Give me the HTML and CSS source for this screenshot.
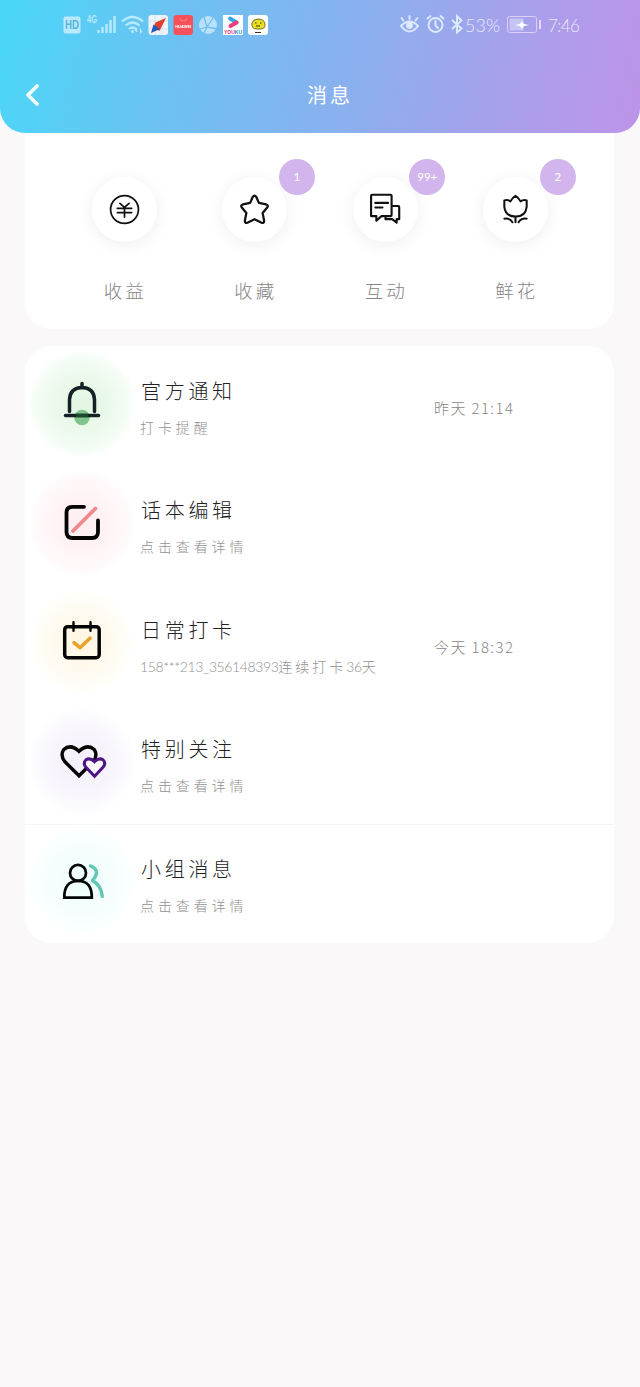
FILE: index.html
```html
<!DOCTYPE html>
<html lang="zh-CN">
<head>
<meta charset="utf-8">
<title>消息</title>
<link rel="stylesheet" href="styles.css">
</head>
<body>
<header class="header">
  <div class="status">
    <svg class="status-left" viewBox="60 10 212 30">
      <rect x="63.500" y="16.500" width="17" height="17" rx="2" fill="#b9e9fc"/>
      <text x="72" y="29" class="hd" textLength="14" lengthAdjust="spacingAndGlyphs">HD</text>
      <text x="92" y="23" class="net" textLength="10" lengthAdjust="spacingAndGlyphs">4G</text>
      <path d="M98.500 33v-3M102.500 33v-6M106.500 33v-9M110.500 33v-13M114.500 33V16" stroke="#b9e9fc" stroke-width="2.400"/>
      <g fill="none" stroke="#b9e9fc" stroke-width="2.200"><path d="M122 21.500q10.500-9 21 0M125.500 25.500q7-6 14 0M129 29q3.500-3 7 0"/></g>
      <circle cx="132.500" cy="31.500" r="1.500" fill="#b9e9fc"/>
      <path d="M136.500 32v-3l-1.500 1.500M140.500 28.500v4l1.500-1.500" fill="none" stroke="#b9e9fc" stroke-width="1.300"/>
      <rect x="148.500" y="15" width="19.500" height="20" rx="3" fill="#eef3fa"/>
      <path d="M155 15v20M162 15v20M148.500 21h19.500M148.500 29h19.500" stroke="#d3dff0" stroke-width=".8"/>
      <path d="M166 18l-10.500 4.500-2 4.500 6 4z" fill="#e0402c"/><path d="M153.500 24.500l6.500 4.500L151 33z" fill="#2459b5"/>
      <rect x="173.500" y="15" width="19.500" height="20" rx="3" fill="#f4515b"/>
      <path d="M180 18q0 3 3.500 3t3.500-3" fill="none" stroke="#fa8c8c" stroke-width=".8"/>
      <text x="183.200" y="28" class="brand">HUAWEI</text>
      <circle cx="208" cy="25" r="9" fill="#b9e2fa"/>
      <path d="M204 17l3 10 10 2M200 29l7-2 6-9M207 27l-3 6" fill="none" stroke="#72bdf0" stroke-width="1.300"/>
      <rect x="223" y="15" width="20" height="20" fill="#fff"/>
      <path d="M230 18.500l6.500 4" stroke="#35a8e8" stroke-width="4" stroke-linecap="round"/>
      <path d="M236.500 22.500l-6 3.500" stroke="#ed3b7b" stroke-width="4" stroke-linecap="round"/>
      <text x="233" y="33.500" class="tiny"><tspan fill="#d63678">YOU</tspan><tspan fill="#2780c8">KU</tspan></text>
      <rect x="248" y="15" width="20" height="20" rx="3" fill="#fff"/>
      <path d="M252 23q1-4 6-4 7 0 7 6 0 4-5 4h-3q-6 0-5-6z" fill="#e9df20" stroke="#55551a" stroke-width=".8"/>
      <path d="M255 23h1.500M260 23h1.500M256 26h4M255 32.500h6" stroke="#333" stroke-width="1.200"/>
    </svg>
    <div class="status-right">
      <svg width="65" height="24" viewBox="399 13 65 24" fill="none" stroke="#dcebff" stroke-width="1.900" stroke-linecap="round">
        <path d="M401 26q8.500-9 17 0-8.500 11-17 0zM409.500 19v-3M403.500 20.500l-2-2.500M415.500 20.500l2-2.500"/><circle cx="409.500" cy="25.500" r="2.500" fill="#dcebff"/>
        <circle cx="435.500" cy="25" r="7"/><path d="M435.500 21v4.500l2.500 2.500M427.500 18.500l3-2.500M443.500 18.500l-3-2.500"/>
        <path d="M452.500 20.500l9 8-4.500 4V16l4.500 4.500-9 8"/>
      </svg>
      <span class="battery-text">53%</span>
      <svg width="36" height="20" viewBox="506 15 36 20"><rect x="507.500" y="16.500" width="29" height="16" rx="2" fill="none" stroke="#dccff7"/><rect x="509.500" y="18.500" width="14" height="12" fill="#c5c5f5"/><path d="M515 25l5-1 2-3 2 3 5 1-5 1-2 3-2-3z" fill="#fff"/><path d="M540 20v9" stroke="#e6dafa" stroke-width="2"/></svg>
      <span class="clock">7:46</span>
    </div>
  </div>
  <div class="navbar">
    <svg class="back" viewBox="0 0 20 26"><path d="M13 4L4 13l9 9" fill="none" stroke="#f1fdff" stroke-width="3.800" stroke-linecap="round" stroke-linejoin="round"/></svg>
    <h1 class="title">消息</h1>
  </div>
</header>
<main class="content">
  <section class="stats">
    <div class="stat">
      <div class="disc"><svg viewBox="0 0 64 64"><circle cx="32" cy="32" r="13.700" stroke-width="1.700"/><path d="M27.500 26l4.500 4 4.500-4M25 31h14M25 35h14M32 30v9.500" stroke-width="1.700"/></svg></div>
      <span class="label">收益</span>
    </div>
    <div class="stat">
      <div class="disc"><svg viewBox="0 0 64 64"><path d="M30.300 19.500Q32 17 33.700 19.500L36.300 25.500L43.500 27Q46 28 44.500 30L40 35.500L41.500 43Q41.500 46 39 45L32 41.500L25 45Q22.500 46 22.500 43L24 35.500L19.500 30Q18 28 20.500 27L27.700 25.500Z" stroke-width="2.200"/></svg><span class="badge">1</span></div>
      <span class="label">收藏</span>
    </div>
    <div class="stat">
      <div class="disc"><svg viewBox="0 0 64 64"><path d="M17.800 18.500Q17.800 17.500 18.800 17.500H37Q38 17.500 38 18.500V37.500Q38 38.500 37 38.500H28L23 43V38.500H17.800ZM22 25.500H34.500M22 30H29M38.500 28.500H44.500Q45.500 28.500 45.500 29.500V41.500H43V45L38.500 41.500H32V39" stroke-width="2.100"/></svg><span class="badge">99+</span></div>
      <span class="label">互动</span>
    </div>
    <div class="stat">
      <div class="disc"><svg viewBox="0 0 64 64"><path d="M21 23Q24.500 22 27 24Q29 20 32 18.500Q35 20 37 24Q39.500 22 43 23V29.500Q42 39 32 39Q22 39 21 29.500ZM32 39V44.500M21 41Q26 40 29 44.500M43 41Q38 40 35 44.500" stroke-width="2"/></svg><span class="badge">2</span></div>
      <span class="label">鲜花</span>
    </div>
  </section>
  <section class="list">
    <div class="row">
      <div class="glow green"><svg viewBox="52 373.500 60 60"><circle cx="82" cy="417" r="7.800" fill="#7fc48a"/><path d="M69.500 411V399Q70 387.500 82 387Q94 387.500 94.500 399V411M82 386V383" stroke="#162126" stroke-width="3.500"/><path d="M65.500 415H98.500" stroke="#162126" stroke-width="3.500"/><path d="M76 415H88" stroke="#1c4a2c" stroke-width="3.500" stroke-linecap="butt"/></svg></div>
      <div class="text"><h2>官方通知</h2><p>打卡提醒</p></div>
      <time>昨天 21:14</time>
    </div>
    <div class="row">
      <div class="glow pink"><svg viewBox="52 493 60 60"><path d="M84 506.800H72.500Q66.500 506.800 66.500 512.500V532Q66.500 538 72.500 538H92Q98 538 98 532V520.500" stroke="#050505" stroke-width="3.800"/><path d="M73 531L95.500 508.500" stroke="#ef898c" stroke-width="3.800"/></svg></div>
      <div class="text"><h2>话本编辑</h2><p>点击查看详情</p></div>
    </div>
    <div class="row">
      <div class="glow yellow"><svg viewBox="52 612.300 60 60"><rect x="64.700" y="627" width="34.500" height="31" rx="3" stroke="#050505" stroke-width="3.500"/><path d="M73.500 622.500V631M90.500 622.500V631" stroke="#050505" stroke-width="2.400"/><path d="M74 643L80 648L90 638.500" stroke="#e9a22d" stroke-width="3.600"/></svg></div>
      <div class="text"><h2>日常打卡</h2><p class="checkin"><span>158***213_356148393</span>连续打卡<span>36</span>天</p></div>
      <time>今天 18:32</time>
    </div>
    <div class="row">
      <div class="glow purple"><svg viewBox="52 731.700 60 60"><path d="M79 775.500L65 761.500Q60 755.500 63.500 749.500Q70.500 743 79 751Q87.500 743 94.500 749.500Q98 755.500 93 761.500Z" stroke="#050505" stroke-width="3.400" stroke-linejoin="miter"/><path d="M94.500 776L86 767Q82.500 763 86 759.500Q90 757 94.500 761.500Q99 757 103 759.500Q106.500 763 103 767Z" fill="#faf7ff" stroke="#4d1683" stroke-width="3" stroke-linejoin="miter"/></svg></div>
      <div class="text"><h2>特别关注</h2><p>点击查看详情</p></div>
    </div>
    <div class="row divided">
      <div class="glow teal"><svg viewBox="52 851.100 60 60"><circle cx="78" cy="873" r="8" stroke="#050505" stroke-width="2.700"/><path d="M64.300 897.800Q64 881 78.200 881Q92 881 91.800 897.800Z" stroke="#050505" stroke-width="2.700" stroke-linejoin="miter"/><path d="M90.500 866Q96 868 96.500 872.500Q96.500 876 92.500 880.500Q101 885 102.300 896.500" stroke="#63c6b2" stroke-width="3.400"/></svg></div>
      <div class="text"><h2>小组消息</h2><p>点击查看详情</p></div>
    </div>
  </section>
</main>
</body>
</html>
```
FILE: styles.css
```css
* { box-sizing: border-box; }
body {
  margin: 0;
  min-height: 1387px;
  background: #faf8f9;
  font-family: "Noto Sans CJK SC", sans-serif;
  font-weight: 300;
}
h1, h2, p { margin: 0; font-weight: 300; white-space: nowrap; }
svg { display: block; flex: none; }

.header {
  height: 133px;
  border-radius: 0 0 25px 25px;
  background: linear-gradient(102deg, #49d7f8 0%, #69c3f2 25%, #8ab0ee 55%, #a99fea 80%, #bd93e8 100%);
}
.status {
  height: 50px;
  padding: 0 61px 0 60px;
  display: flex;
  align-items: center;
  justify-content: space-between;
}
.status-left { width: 212px; height: 30px; }
.status-left text { text-anchor: middle; font-family: "Liberation Sans", sans-serif; font-weight: 700; }
.status-left .hd { font-size: 12px; fill: #55b6dc; }
.status-left .net { font-size: 10px; fill: #b9e9fc; }
.status-left .brand { font-size: 4px; fill: #fff; }
.status-left .tiny { font-size: 5px; }
.status-right { display: flex; align-items: center; color: #e9e8fd; font-family: Lato, sans-serif; font-size: 18px; font-weight: 300; }
.battery-text { width: 42px; padding-left: 1px; }
.clock { width: 37px; padding-left: 6px; font-size: 17px; letter-spacing: -.6px; }

.navbar { height: 83px; padding: 1px 22px 0 24px; display: grid; grid-template-columns: 38px 1fr 40px; align-items: center; }
.back { width: 20px; height: 26px; margin-top: 5px; }
.title { color: #fff; text-align: center; font-size: 20px; letter-spacing: 3px; margin: 6px -20px 0 0; font-weight: 400; line-height: 28px; }

.content { padding: 0 26px 0 25px; }
.stats {
  height: 196px;
  padding: 44px 34px 0;
  display: grid;
  grid-template-columns: repeat(4, 130.5px);
  background: #fff;
  border-radius: 0 0 26px 26px;
}
.stat { display: flex; flex-direction: column; align-items: center; }
.disc { position: relative; width: 65px; height: 65px; border-radius: 50%; background: #fff; box-shadow: 0 3px 18px rgba(0, 0, 0, .065); }
.disc svg { width: 65px; height: 65px; fill: none; stroke: #111; stroke-linejoin: round; stroke-linecap: round; }
.badge { position: absolute; top: -18px; right: -27.500px; width: 36px; height: 36px; border-radius: 50%; background: #d2b5ed; color: #fff; font: 400 11.500px/36px Lato, sans-serif; text-align: center; }
.label { margin-top: 34px; line-height: 28px; font-size: 18.500px; letter-spacing: 3px; padding-left: 2px; color: #858585; }

.list { margin-top: 17px; background: #fff; border-radius: 26px; }
.row { height: 119.400px; display: flex; align-items: flex-start; }
.divided { border-top: 1px solid #f6f5f6; }
.glow { width: 108px; height: 108px; margin: 3.500px 4px 0 3px; border-radius: 50%; display: flex; align-items: center; justify-content: center; flex: none; }
.divided .glow { margin-top: 2.500px; }
.glow svg { width: 60px; height: 60px; fill: none; stroke-linecap: round; stroke-linejoin: round; }
.green { background: radial-gradient(closest-side, #e2f7e2 0%, #ebf9eb 50%, #f5fdf6 88%, #fff 100%); }
.pink { background: radial-gradient(closest-side, #ffedf0 0%, #fff3f5 50%, #fffafb 88%, #fff 100%); }
.yellow { background: radial-gradient(closest-side, #fff6df 0%, #fffaee 50%, #fffefa 88%, #fff 100%); }
.purple { background: radial-gradient(closest-side, #f4effc 0%, #f7f4fc 50%, #fcfbfe 88%, #fff 100%); }
.teal { background: radial-gradient(closest-side, #ebfdfa 0%, #f4fefd 50%, #fbffff 88%, #fff 100%); }
.text { width: 294px; padding-top: 30px; }
.divided .text { padding-top: 29px; }
.text h2 { padding-left: 1px; font-size: 20px; line-height: 30px; letter-spacing: 3.700px; color: #222; }
.text p { margin-top: 8px; font-size: 14px; line-height: 26px; letter-spacing: 3.900px; color: #929292; }
.text .checkin { letter-spacing: 3px; }
.text .checkin span { font-family: Lato, sans-serif; letter-spacing: -.400px; }
time { padding-top: 49px; font-size: 15px; line-height: 26px; letter-spacing: 1.400px; color: #858585; white-space: nowrap; }
```
